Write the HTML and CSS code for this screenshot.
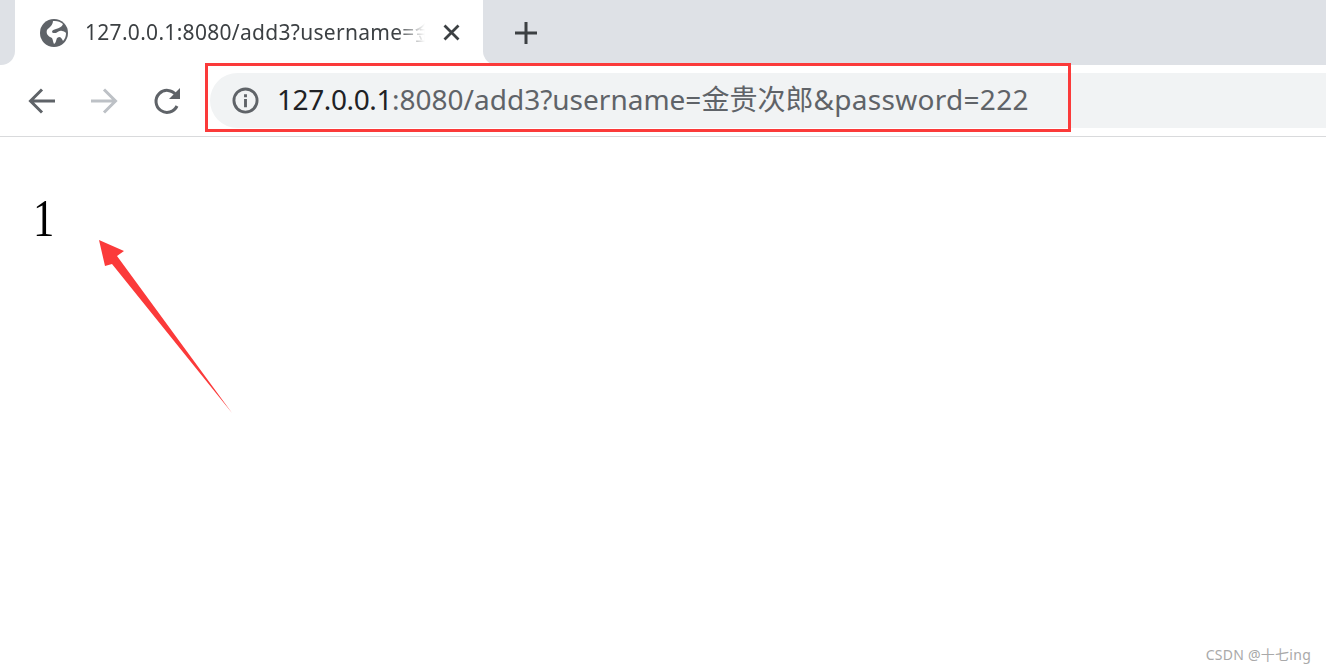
FILE: index.html
```html
<!DOCTYPE html>
<html lang="zh-CN">
<head>
  <meta charset="UTF-8" />
  <title>127.0.0.1:8080/add3</title>
  <link rel="stylesheet" href="styles.css">
</head>
<body>
  <header class="chrome">
    <div class="tabstrip">
      <div class="strip-start"></div>
      <div class="tab">
        <svg class="favicon" viewBox="0 0 28 28">
          <circle cx="14" cy="14" r="14" fill="#5f6368"/>
          <path d="M13 2c4-.500 7 .500 10 3-1 3-4 4-7 5-2 .500-4 1-4 3 0 1 2 1 4 1 2-1 4-3 6-2 2 0 3 1 4 2 0 3-1 6-3 8-1-2-2-4-4-4l-2 1c-1 2-1 5-3 6-1-2-1-4-2-6-2-1-4-2-5-4-1-3 0-5 2-6 2-2 4-4 4-7z" fill="#fff"/>
        </svg>
        <span class="tab-title">127.0.0.1:8080/add3?username=金贵次郎&amp;password=222</span>
        <svg class="tab-close" viewBox="0 0 17 17">
          <path d="M1.500 1.500l14 14M15.500 1.500l-14 14" stroke="#3c4043" stroke-width="2.800" fill="none"/>
        </svg>
      </div>
      <div class="strip-rest">
        <svg class="new-tab" viewBox="0 0 24 24">
          <path d="M12 1v22M1 12h22" stroke="#3c4043" stroke-width="3" fill="none"/>
        </svg>
      </div>
    </div>
    <div class="toolbar">
      <svg class="nav-icon" viewBox="0 0 28 28">
        <path d="M27 14H3M14 2.500L2.500 14 14 25.500" stroke="#5f6368" stroke-width="3" fill="none"/>
      </svg>
      <svg class="nav-icon" viewBox="0 0 28 28">
        <path d="M1 14h24M14 2.500L25.500 14 14 25.500" stroke="#bdc1c6" stroke-width="3" fill="none"/>
      </svg>
      <svg class="nav-icon nav-reload" viewBox="0 0 28 28">
        <path d="M23 19a11 11 0 1 1-1-11" stroke="#5f6368" stroke-width="3" fill="none"/>
        <path d="M26 1v11H15z" fill="#5f6368"/>
      </svg>
      <div class="omnibox">
        <svg class="info-icon" viewBox="0 0 28 28">
          <circle cx="14" cy="14" r="12" stroke="#5f6368" stroke-width="3" fill="none"/>
          <path d="M12.500 12.500h3V21h-3zM12.500 7.500h3v3h-3z" fill="#5f6368"/>
        </svg>
        <span class="url"><span class="url-host">127.0.0.1</span>:8080/add3?username=金贵次郎<span class="url-tail">&amp;password=222</span></span>
      </div>
    </div>
  </header>
  <main class="page">1</main>

  <div class="mark-box"></div>
  <svg class="mark-arrow" viewBox="0 0 135 175">
    <path d="M1 1L26 12 19 17 134 174 14 25 7 27z" fill="#fb3a3a"/>
  </svg>
  <div class="watermark">CSDN @十七ing</div>
</body>
</html>
```

FILE: styles.css
```css
html, body {
  margin: 0;
  padding: 0;
  height: 100%;
  background: #fff;
  overflow: hidden;
}
.chrome {
  font-family: 'Noto Sans', 'Noto Sans CJK SC', sans-serif;
  border-bottom: 1px solid #d9dadc;
}
.tabstrip {
  display: flex;
  height: 65px;
}
.strip-start {
  width: 15px;
  background: #dee1e6;
  border-bottom-right-radius: 14px;
}
.tab {
  width: 468px;
  display: flex;
  align-items: center;
  background: #fff;
  border-radius: 15px 15px 0 0;
  box-sizing: border-box;
  padding-left: 25px;
}
.favicon {
  width: 28px;
  height: 28px;
  flex: none;
  margin-top: 1px;
}
.tab-title {
  width: 344px;
  margin-left: 17px;
  margin-top: -3px;
  font-size: 21px;
  letter-spacing: 0.3px;
  color: #3c4043;
  white-space: nowrap;
  overflow: hidden;
  -webkit-mask-image: linear-gradient(to right, #000 312px, transparent 340px);
  mask-image: linear-gradient(to right, #000 312px, transparent 340px);
}
.tab-close {
  width: 17px;
  height: 17px;
  margin-left: 14px;
  flex: none;
}
.strip-rest {
  flex: 1;
  display: flex;
  align-items: center;
  background: #dee1e6;
  border-bottom-left-radius: 14px;
  padding-left: 31px;
}
.new-tab {
  width: 24px;
  height: 24px;
}
.toolbar {
  display: flex;
  align-items: center;
  height: 71px;
  padding-left: 28px;
}
.nav-icon {
  width: 28px;
  height: 28px;
  flex: none;
  margin-right: 34px;
}
.nav-reload {
  margin-left: 2px;
  margin-right: 28px;
}
.omnibox {
  flex: 1;
  height: 55px;
  display: flex;
  align-items: center;
  padding-left: 22px;
  background: #f1f3f4;
  border-radius: 28px 0 0 28px;
}
.info-icon {
  width: 27px;
  height: 27px;
  flex: none;
}
.url {
  margin-left: 18px;
  margin-top: -6px;
  font-size: 28px;
  color: #5f6368;
  white-space: nowrap;
}
.url-host {
  color: #202124;
  letter-spacing: -0.4px;
}
.url-tail {
  letter-spacing: 0.3px;
}
.page {
  margin-top: 51px;
  margin-left: 33px;
  font-family: 'Liberation Serif', serif;
  font-size: 52px;
  line-height: 62px;
  color: #000;
  transform: scaleX(0.82);
  transform-origin: left;
}
.mark-box {
  position: absolute;
  left: 205px;
  top: 63px;
  width: 860px;
  height: 63px;
  border: 3px solid #fb3a3a;
}
.mark-arrow {
  position: absolute;
  left: 98px;
  top: 239px;
  width: 135px;
  height: 175px;
}
.watermark {
  position: absolute;
  right: 15px;
  top: 644px;
  font-family: 'Noto Sans', 'Noto Sans CJK SC', sans-serif;
  font-size: 14px;
  letter-spacing: 0.25px;
  color: #a9a9a9;
}
```
